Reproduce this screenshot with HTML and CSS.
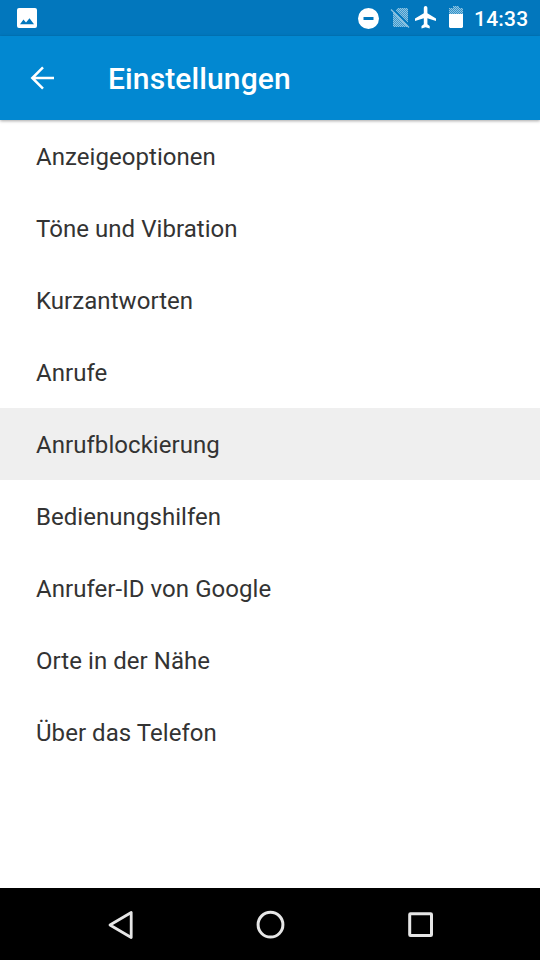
FILE: index.html
```
<!DOCTYPE html>
<html lang="de">
<head>
    <meta charset="UTF-8">
    <meta name="viewport" content="width=device-width, initial-scale=1.0">
    <title>Einstellungen</title>
    <link rel="stylesheet" href="styles.css">
</head>
<body>
    <div class="status-bar">
        <svg class="photo" width="20" height="36" viewBox="0 0 20 36">
            <path fill="#fff" fill-rule="evenodd" d="M2 8h16a2 2 0 0 1 2 2v16a2 2 0 0 1-2 2H2a2 2 0 0 1-2-2V10a2 2 0 0 1 2-2zM3 24.300h14l-4.500-6-3.500 4.300-2.500-3z"/>
        </svg>
        <div class="status-icons">
            <svg width="22" height="36" viewBox="0 0 22 36">
                <path fill="#fff" fill-rule="evenodd" d="M10.500 8a10.500 10.500 0 1 1 0 21 10.500 10.500 0 0 1 0-21zM5.500 17v3h10v-3z"/>
            </svg>
            <svg class="sim" width="20" height="36" viewBox="0 0 20 36">
                <defs>
                    <pattern id="dots" width="2" height="2" patternUnits="userSpaceOnUse">
                        <path fill="#8fc4e2" d="M0 0h1v1H0zM1 1h1v1H1z"/>
                    </pattern>
                </defs>
                <path fill="#3a97cc" d="M8 8h9l1 1v17l-1 1H4l-1-1V13z"/>
                <path fill="url(#dots)" d="M8 8h9l1 1v17l-1 1H4l-1-1V13z"/>
                <path stroke="#0277bd" stroke-width="2" d="M2 8l17 17"/>
                <path stroke="#8fc4e2" stroke-width="1.300" d="M1 9.500l18 18"/>
            </svg>
            <svg class="plane" width="22" height="36" viewBox="0 0 22 36">
                <path fill="#fff" d="M21 21v-2.400l-8.600-5.400V7.800a1.800 1.800 0 0 0-3.600 0v5.400L0 18.600V21l8.800-2.700v6L6.500 26v2.500l4.100-1.200 4.100 1.200V26l-2.300-1.700v-6z"/>
            </svg>
            <svg class="battery" width="14" height="36" viewBox="0 0 14 36">
                <path fill="#3393ca" d="M4 6h6v2h4v6H0V8h4z"/>
                <path fill="url(#dots)" d="M4 6h6v2h4v6H0V8h4z"/>
                <path fill="#fff" d="M0 14h14v13l-1 1H1l-1-1z"/>
            </svg>
            <span class="clock">14:33</span>
        </div>
    </div>

    <div class="toolbar">
        <svg width="24" height="24" viewBox="0 0 24 24">
            <path fill="none" stroke="#fff" stroke-width="2.500" d="M24 12H2.500M13 1.300L2.300 12 13 22.700"/>
        </svg>
        <h1>Einstellungen</h1>
    </div>

    <ul class="settings">
        <li>Anzeigeoptionen</li>
        <li>Töne und Vibration</li>
        <li>Kurzantworten</li>
        <li>Anrufe</li>
        <li class="active">Anrufblockierung</li>
        <li>Bedienungshilfen</li>
        <li>Anrufer-ID von Google</li>
        <li>Orte in der Nähe</li>
        <li>Über das Telefon</li>
    </ul>

    <div class="nav">
        <svg width="30" height="30" viewBox="0 0 30 30">
            <path fill="none" stroke="#e6e6e6" stroke-width="2.800" stroke-linejoin="round" d="M26.200 2.500v25L5 15z"/>
        </svg>
        <svg width="30" height="30" viewBox="0 0 30 30">
            <circle cx="15.500" cy="14.700" r="12.400" fill="none" stroke="#e6e6e6" stroke-width="3"/>
        </svg>
        <svg width="30" height="30" viewBox="0 0 30 30">
            <rect x="4.700" y="3.700" width="21.800" height="21.800" rx=".8" fill="none" stroke="#e6e6e6" stroke-width="3"/>
        </svg>
    </div>
</body>
</html>
```
FILE: styles.css
```
body {
    font-family: Roboto, sans-serif;
    margin: 0;
    height: 960px;
    background: #fff;
    color: #333;
    display: flex;
    flex-direction: column;
    overflow: hidden;
}

svg {
    display: block;
    flex: none;
}

.status-bar {
    display: flex;
    justify-content: space-between;
    height: 36px;
    padding: 0 12px 0 17px;
    background: #0277bd;
    color: #fff;
}

.status-icons {
    display: flex;
}

.sim {
    margin-left: 10px;
}

.plane {
    margin-left: 5px;
}

.battery {
    margin-left: 12px;
}

.clock {
    width: 54px;
    margin-left: 11px;
    font-size: 21px;
    font-weight: 500;
    letter-spacing: 0.2px;
    line-height: 39px;
    white-space: nowrap;
}

.toolbar {
    display: flex;
    align-items: center;
    height: 84px;
    padding-left: 30px;
    background: #0288d1;
    box-shadow: 0 1px 3px rgba(0, 0, 0, 0.35);
    color: #fff;
}

.toolbar h1 {
    margin: 2px 0 0 54px;
    font-size: 30px;
    font-weight: 500;
    letter-spacing: 0.12px;
    line-height: 36px;
}

.settings {
    flex: 1;
    margin: 0;
    padding: 0;
    list-style: none;
}

.settings li {
    height: 72px;
    padding-left: 36px;
    font-size: 24px;
    letter-spacing: 0.05px;
    line-height: 75px;
}

.settings .active {
    background: #efefef;
}

.nav {
    display: flex;
    align-items: center;
    justify-content: center;
    gap: 120px;
    box-sizing: border-box;
    height: 72px;
    padding-top: 2px;
    background: #000;
}
```
